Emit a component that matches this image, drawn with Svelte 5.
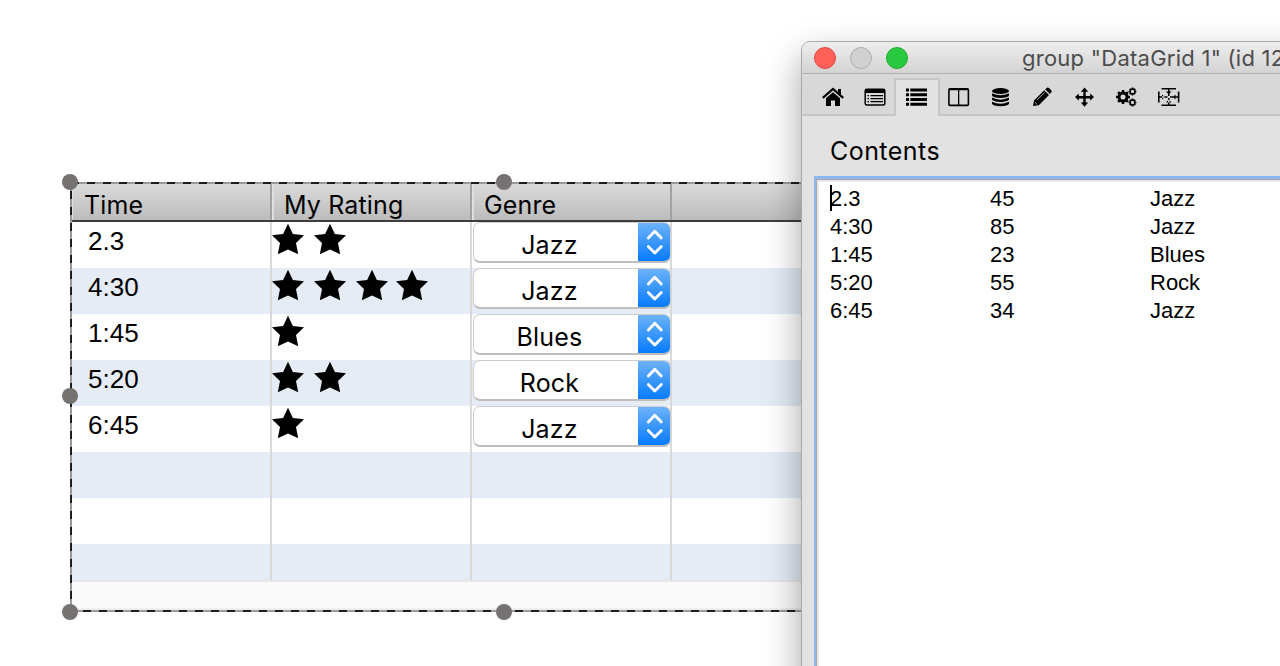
<script>
  const rows = [
    { time: '2.3', stars: 2, rating: 45, genre: 'Jazz' },
    { time: '4:30', stars: 4, rating: 85, genre: 'Jazz' },
    { time: '1:45', stars: 1, rating: 23, genre: 'Blues' },
    { time: '5:20', stars: 2, rating: 55, genre: 'Rock' },
    { time: '6:45', stars: 1, rating: 34, genre: 'Jazz' }
  ];
  const empty = [0, 1, 2];
  const starX = [0, 42, 84, 124];
  const handles = [[70, 182], [504, 182], [70, 396], [70, 612], [504, 612]];
  const teeth = [0, 45, 90, 135];
  const quarter = [0, 90, 180, 270];
</script>

<main>
  <section class="grid">
    <header>
      <span class="h first">Time</span><span class="h">My Rating</span><span class="h">Genre</span><span class="h rest"></span>
    </header>
    <div class="body">
      {#each rows as r}
        <div class="row">
          <div class="cell time"><span>{r.time}</span></div>
          <div class="cell">
            <svg width="180" height="46">
              {#each starX.slice(0, r.stars) as x}
                <path transform="translate({x} 0)" d="M16 1.8 L20.9 12 L32 13.2 L24 21 L26.2 32.3 L16 27.6 L5.8 32.3 L8 21 L0 13.2 L11.1 12Z" />
              {/each}
            </svg>
          </div>
          <div class="cell">
            <div class="popup">
              <span>{r.genre}</span>
              <i><svg width="33" height="40" fill="none" stroke="#fff" stroke-width="2.8" stroke-linecap="round" stroke-linejoin="round"><path d="M10.3 16 L16.8 9.3 L23.300 16 M10.3 24.5 L16.8 31 L23.300 24.5" /></svg></i>
            </div>
          </div>
        </div>
      {/each}
      {#each empty as e}
        <div class="row"><div class="cell"></div><div class="cell"></div><div class="cell"></div></div>
      {/each}
    </div>
    <footer></footer>
  </section>

  <svg class="selection" width="1280" height="666">
    <path d="M71 182 V612 M70 183 H1280 M70 611 H1280" stroke="#9b9b9b" stroke-width="2" />
    <path d="M71 191 V612" stroke="#1c1c1c" stroke-width="2" stroke-dasharray="8 8" />
    <path d="M71 183 H1280" stroke="#1c1c1c" stroke-width="2" stroke-dasharray="8 8" />
    <path d="M83 611 H1280" stroke="#1c1c1c" stroke-width="2" stroke-dasharray="8 8" />
    {#each handles as [x, y]}<circle cx={x} cy={y} r="8" fill="#767271" />{/each}
  </svg>

  <section class="window">
    <div class="title">
      <b class="red"></b><b class="gray"></b><b class="green"></b>
      <span>group "DataGrid 1" (id 12</span>
    </div>
    <nav>
      <span class="tab"><svg viewBox="0 0 22 20"><path d="M.8 10.8 L11 2 L21.200 10.8" fill="none" stroke="#000" stroke-width="2.200" /><path d="M16 2h3v6l-3-2.5z M4 11.300 L11 5.300 L18 11.300 V19 H13 V13.5 H9 V19 H4z" /></svg></span>
      <span class="tab"><svg viewBox="0 0 22 20"><rect x="1.2" y="2.2" width="19.6" height="15.8" rx="1.5" fill="none" stroke="#000" stroke-width="1.5" /><path d="M1 2h20v4H1z M3.5 8h1.5v1.3H3.5z M6.5 8H19v1.3H6.5z M3.5 11h1.5v1.3H3.5z M6.5 11H19v1.3H6.5z M3.5 14h1.5v1.3H3.5z M6.5 14H19v1.3H6.5z" /></svg></span>
      <span class="tab active"><svg viewBox="0 0 22 20"><path d="M0 1.500h3v3H0z M4.3 1.500H21v3H4.3z M0 6.2h3v3H0z M4.3 6.2H21v3H4.3z M0 11h3v3H0z M4.3 11H21v3H4.3z M0 15.700h3v3H0z M4.3 15.700H21v3H4.3z" /></svg></span>
      <span class="tab"><svg viewBox="0 0 22 20"><rect x=".9" y="1.9" width="19.5" height="16.5" rx="1" fill="none" stroke="#000" stroke-width="1.6" /><path d="M1 1.3h19v2H1z M10 2h1.300v16h-1.300z" /></svg></span>
      <span class="tab"><svg viewBox="0 0 22 20"><ellipse cx="10.5" cy="4" rx="8.5" ry="3" /><path d="M2 6.2q8.5 4.2 17 0v2.2q-1 2.4-8.5 2.5q-7.500-.1-8.500-2.500z M2 10.600q8.500 4.200 17 0v2q-1 2.400-8.500 2.500q-7.500-.1-8.500-2.500z M2 14.700q8.500 4.200 17 0v2q-1 2.400-8.500 2.500q-7.500-.1-8.500-2.500z" /></svg></span>
      <span class="tab"><svg viewBox="0 0 22 20"><path d="M1 19 L2 13.500 L12.200 3.300 L17 8.100 L6.800 18.300z M13.200 2.300 L15 .7 Q16 .2 17 1 L19.500 3.500 Q20 4.400 19.400 5.300 L17.800 7z" /><path d="M5 12.800 L12.500 5.400 M2.800 15.200 L5.200 17.500" stroke="#d8d8d8" stroke-width=".8" /></svg></span>
      <span class="tab"><svg viewBox="0 0 22 20"><path d="M10.500 .5 L14.200 4.700 H11.700 V8.900 H16.200 V6.400 L20 10.100 L16.200 13.800 V11.400 H11.700 V15.500 H14.200 L10.500 19.700 L6.800 15.500 H9.300 V11.400 H4.800 V13.800 L1 10.100 L4.800 6.400 V8.900 H9.300 V4.700 H6.800z" /></svg></span>
      <span class="tab"><svg viewBox="0 0 22 20" fill="none" stroke="#000">
        <circle cx="7" cy="10" r="4" stroke-width="3" />
        {#each teeth as a}<path transform="rotate({a} 7 10)" d="M7 3v2 M7 15v2" stroke-width="2.500" />{/each}
        <circle cx="16.500" cy="4.500" r="2.400" stroke-width="1.500" /><circle cx="16.500" cy="15.500" r="2.400" stroke-width="1.500" />
        {#each teeth as a}<path transform="rotate({a} 16.500 4.500)" d="M16.500 .6v1.400 M16.500 7v1.400" stroke-width="1.600" /><path transform="rotate({a} 16.500 15.500)" d="M16.500 11.600v1.400 M16.500 18v1.400" stroke-width="1.600" />{/each}
      </svg></span>
      <span class="tab"><svg viewBox="0 0 22 20"><path d="M3.500 1.800H18 M3.500 18.200H18 M.8 4.500V15.500 M20.600 4.500V15.500" stroke="#000" stroke-width="1.600" />
        <path d="M10 2h1.500v7h-1.500z M10 11h1.500v7h-1.500z M1 9.300h8.500v1.500H1z M12 9.300h8.500v1.500H12z M8 4.500h5.500L10.750 7.500z M8 15.500h5.500L10.750 12.500z M4 7.500v5L6.800 10z M17.500 7.500v5L14.700 10z" />
      </svg></span>
    </nav>
    <h1>Contents</h1>
    <div class="editor">
      <div class="inner">
        <em></em>
        {#each rows as r}
          <div class="line"><span>{r.time}</span><span>{r.rating}</span><span>{r.genre}</span></div>
        {/each}
      </div>
    </div>
  </section>
</main>

<style>
  :global(body) { background: #fff; overflow: hidden; }
  main { position: relative; width: 1280px; height: 666px; overflow: hidden; background: #fff; color: #000; font-family: Inter, sans-serif; }
  .grid { box-sizing: border-box; padding: 184px 0 0 72px; width: 1280px; }
  header { display: flex; height: 36px; background: linear-gradient(#dadada, #bcbcbc); border-bottom: 2px solid #3d3d3d; }
  .h { box-sizing: border-box; width: 200px; padding-left: 10px; border-left: 2px solid #e0e0e0; border-right: 2px solid #a2a2a2; font-size: 25px; letter-spacing: .15px; line-height: 42px; white-space: nowrap; }
  .h.first { border-left-width: 1px; padding-left: 11px; }
  .h.rest { flex: 1; border: 0; }
  .body { height: 358px; overflow: hidden; }
  .row { display: flex; height: 46px; }
  .row:nth-child(even) { background: #e5ecf6; }
  .cell { box-sizing: border-box; width: 200px; border-right: 2px solid #d8d8d8; }
  .time { font: 26px/38px "Liberation Sans", sans-serif; padding-left: 16px; }
  .cell > svg { display: block; }
  .popup { box-sizing: border-box; display: flex; width: 198px; height: 41px; margin-left: 1px; border: 1px solid #cdcdcd; border-bottom: 2px solid #bebebe; border-radius: 7px; background: #fff; overflow: hidden; }
  .popup span { flex: 1; text-align: center; margin-right: 14px; font-size: 25px; letter-spacing: .2px; line-height: 44px; }
  .popup i { width: 33px; height: 40px; flex: none; margin: -1px -1px 0; background: linear-gradient(#6eb4fa, #057aff); }
  .popup svg { display: block; }
  footer { box-sizing: border-box; height: 30px; background: #fafafa; border-top: 2px solid #e7e7e7; border-bottom: 2px solid #eee; }
  .selection { position: absolute; inset: 0; }
  .window { position: absolute; left: 801px; top: 41px; width: 700px; height: 700px; box-sizing: border-box; border: 1px solid #a9a9a9; border-radius: 9px; background: #e2e2e2; box-shadow: 0 16px 36px rgba(0,0,0,.36); overflow: hidden; }
  .title { box-sizing: border-box; display: flex; align-items: center; height: 32px; padding-left: 12px; gap: 14px; border-bottom: 1px solid #b1b1b1; background: linear-gradient(#eee, #d3d3d3); }
  .title b { box-sizing: border-box; width: 22px; height: 22px; flex: none; border-radius: 50%; border-width: 1px; border-style: solid; }
  .red { background: #ff6159; border-color: #e5453f; }
  .gray { background: #d0d0d0; border-color: #adadad; }
  .green { background: #29ca41; border-color: #1eab2d; }
  .title span { margin-left: 100px; font-size: 22px; letter-spacing: .25px; color: #4c4c4c; white-space: nowrap; }
  nav { display: flex; box-sizing: border-box; height: 42px; padding: 4px 0 0 9px; background: #d8d8d8; border-bottom: 2px solid #c6c6c6; }
  .tab { box-sizing: border-box; flex: none; width: 42px; height: 36px; padding: 9px 0 0 11px; }
  .tab svg { display: block; width: 22px; height: 20px; }
  .active { width: 46px; height: 38px; margin: 0 -3px 0 -1px; padding: 7px 0 0 10px; border: 2px solid #c6c6c6; border-bottom: 0; background: #e2e2e2; }
  h1 { margin: 0; padding: 17px 0 0 28px; font-size: 25px; letter-spacing: .45px; line-height: 36px; font-weight: 400; }
  .editor { margin: 7px 0 0 12px; height: 500px; border: 2px solid #8bb8ee; border-top-width: 3px; }
  .inner { height: 100%; border-left: 1px solid #a8a8a8; border-top: 1px solid #a8a8a8; box-shadow: inset 2px 2px #e8e8ec; background: #fff; padding: 5px 0 0 13px; position: relative; }
  em { position: absolute; left: 13px; top: 5px; width: 1.5px; height: 26px; background: #000; }
  .line { display: grid; grid-template-columns: 160px 160px 1fr; font: 22px/28px "Liberation Sans", sans-serif; }
</style>
